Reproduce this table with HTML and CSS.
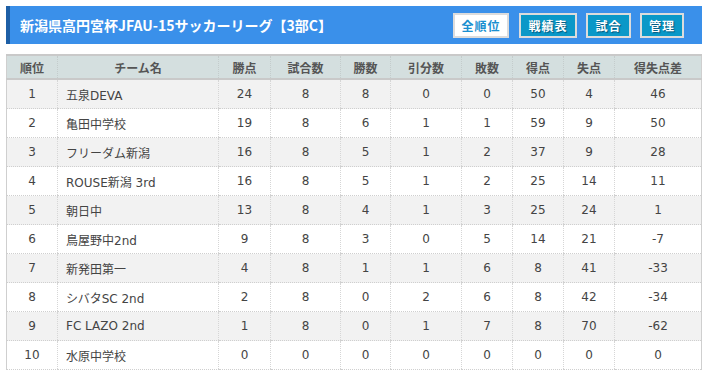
FILE: index.html
```html
<!DOCTYPE html>
<html lang="ja">
<head>
<meta charset="utf-8">
<link rel="stylesheet" href="styles.css">
</head>
<body>
<div class="wrap">
  <div class="titlebar">
    <h1 class="title">新潟県高円宮杯JFAU-15サッカーリーグ【3部C】</h1>
    <div class="btns">
      <span class="btn active w56">全順位</span>
      <span class="btn w58">戦績表</span>
      <span class="btn w45">試合</span>
      <span class="btn w44">管理</span>
    </div>
  </div>
  <table class="standings">
    <colgroup>
      <col style="width:51px"><col style="width:161px"><col style="width:52px"><col style="width:70px"><col style="width:50px"><col style="width:71px"><col style="width:51px"><col style="width:51px"><col style="width:51px"><col>
    </colgroup>
    <thead>
      <tr><th>順位</th><th>チーム名</th><th>勝点</th><th>試合数</th><th>勝数</th><th>引分数</th><th>敗数</th><th>得点</th><th>失点</th><th>得失点差</th></tr>
    </thead>
    <tbody>
      <tr><td>1</td><td class="name">五泉DEVA</td><td>24</td><td>8</td><td>8</td><td>0</td><td>0</td><td>50</td><td>4</td><td>46</td></tr>
      <tr><td>2</td><td class="name">亀田中学校</td><td>19</td><td>8</td><td>6</td><td>1</td><td>1</td><td>59</td><td>9</td><td>50</td></tr>
      <tr><td>3</td><td class="name">フリーダム新潟</td><td>16</td><td>8</td><td>5</td><td>1</td><td>2</td><td>37</td><td>9</td><td>28</td></tr>
      <tr><td>4</td><td class="name">ROUSE新潟 3rd</td><td>16</td><td>8</td><td>5</td><td>1</td><td>2</td><td>25</td><td>14</td><td>11</td></tr>
      <tr><td>5</td><td class="name">朝日中</td><td>13</td><td>8</td><td>4</td><td>1</td><td>3</td><td>25</td><td>24</td><td>1</td></tr>
      <tr><td>6</td><td class="name">鳥屋野中2nd</td><td>9</td><td>8</td><td>3</td><td>0</td><td>5</td><td>14</td><td>21</td><td>-7</td></tr>
      <tr><td>7</td><td class="name">新発田第一</td><td>4</td><td>8</td><td>1</td><td>1</td><td>6</td><td>8</td><td>41</td><td>-33</td></tr>
      <tr><td>8</td><td class="name">シバタSC 2nd</td><td>2</td><td>8</td><td>0</td><td>2</td><td>6</td><td>8</td><td>42</td><td>-34</td></tr>
      <tr><td>9</td><td class="name">FC LAZO 2nd</td><td>1</td><td>8</td><td>0</td><td>1</td><td>7</td><td>8</td><td>70</td><td>-62</td></tr>
      <tr><td>10</td><td class="name">水原中学校</td><td>0</td><td>0</td><td>0</td><td>0</td><td>0</td><td>0</td><td>0</td><td>0</td></tr>
    </tbody>
  </table>
</div>
</body>
</html>
```
FILE: styles.css
```css
html, body {
  margin: 0;
  padding: 0;
  background: #fff;
}
body {
  font-family: "DejaVu Sans", "Noto Sans CJK JP", sans-serif;
  color: #444;
}
.wrap {
  padding: 6px 0 0 6px;
  width: 696px;
}
.titlebar {
  display: flex;
  align-items: center;
  justify-content: space-between;
  height: 38px;
  background: #3a90ea;
  border-left: 4px solid #1d5fa6;
  box-sizing: border-box;
  padding: 0 18px 0 10px;
}
.title {
  margin: 0;
  font-family: "Noto Sans CJK JP", sans-serif;
  font-size: 14px;
  font-weight: bold;
  color: #fff;
  letter-spacing: 0;
}
.btns {
  display: flex;
  gap: 9px;
}
.btn {
  display: flex;
  align-items: center;
  justify-content: center;
  height: 25px;
  box-sizing: border-box;
  padding: 0;
  white-space: nowrap;
  border: 2px solid #dcdcdc;
  background: #0a98c8;
  color: #fff;
  font-family: "Noto Sans CJK JP", sans-serif;
  font-size: 12px;
  font-weight: bold;
  text-shadow: 1px 1px 1px #05557a;
  letter-spacing: 1px;
}
.btn.active {
  background: #fff;
  color: #1a8fd0;
  text-shadow: none;
  margin-right: 1px;
}
.w56 { width: 56px; }
.w58 { width: 58px; }
.w45 { width: 45px; }
.w44 { width: 44px; }
.standings {
  margin-top: 10px;
  width: 696px;
  border-collapse: collapse;
  table-layout: fixed;
  font-size: 12px;
  border-left: 1px solid #cfcfcf;
  border-right: 1px solid #cfcfcf;
}
.standings th {
  height: 22px;
  background: #d4dfdf;
  color: #555;
  font-family: "Noto Sans CJK JP", sans-serif;
  font-weight: bold;
  font-size: 12px;
  border-top: 2px solid #c9c9c9;
  border-bottom: 2px solid #c9c9c9;
  border-left: 1px dotted #c4cccc;
  padding: 0;
  text-align: center;
}
.standings th:first-child { border-left: 1px solid #cfcfcf; }
.standings td {
  height: 28px;
  padding: 0;
  text-align: center;
  color: #444;
  border-bottom: 1px dotted #cfcfcf;
  border-left: 1px dotted #d6d6d6;
}
.standings td:first-child { border-left: 1px solid #cfcfcf; }
.standings tbody tr:nth-child(odd) td { background: #f2f2f2; }
.standings td.name {
  text-align: left;
  padding-left: 8px;
}
```
